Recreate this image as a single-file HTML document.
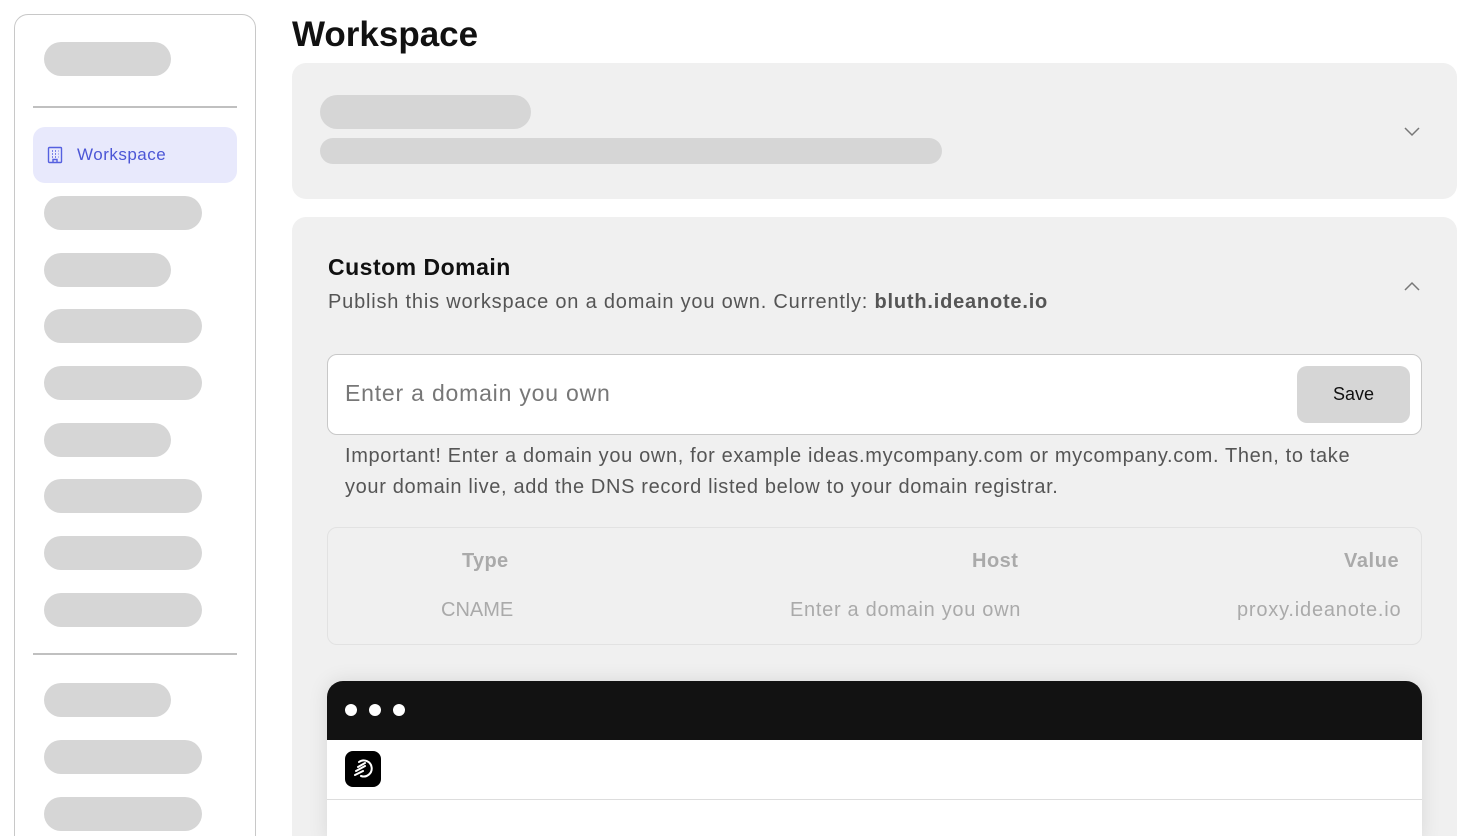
<!DOCTYPE html>
<html style="height:836px;overflow:hidden"><head><meta charset="utf-8"><style>
*{box-sizing:border-box;margin:0;padding:0}
body{width:1472px;height:836px;overflow:hidden;background:#fff;font-family:"Liberation Sans",sans-serif;position:relative}
.sk{position:absolute;background:#d6d6d6;border-radius:17px}
.side{position:absolute;left:14px;top:14px;width:242px;height:840px;border:1px solid #c8c8c8;border-radius:14px}
.hr{position:absolute;left:33px;width:204px;height:2px;background:#c0c0c0}
.card{position:absolute;left:292px;width:1165px;background:#f0f0f0;border-radius:14px}
.abs{position:absolute}
</style></head><body>
<div class="side"></div>
<div class="sk" style="left:44px;top:42px;width:127px;height:34px"></div>
<div class="hr" style="top:106px"></div>
<div class="abs" style="left:33px;top:127px;width:204px;height:56px;background:#e8e9fc;border-radius:12px"></div>
<svg class="abs" style="left:46px;top:146px" width="18" height="18" viewBox="0 0 18 18" fill="none" stroke="#5560e0" stroke-width="1.4"><rect x="2.5" y="1.5" width="13" height="15" rx="1"/><path d="M6 5h1M9 5h1M12 5h0.5M6 8h1M9 8h1M12 8h0.5M6 11h1M9 11h1M12 11h0.5M7 16.5v-3h4v3"/></svg>
<div class="abs" style="left:77px;top:145px;font-size:17px;color:#4c56d6;letter-spacing:0.5px">Workspace</div>
<div class="sk" style="left:44px;top:196px;width:158px;height:34px"></div>
<div class="sk" style="left:44px;top:253px;width:127px;height:34px"></div>
<div class="sk" style="left:44px;top:309px;width:158px;height:34px"></div>
<div class="sk" style="left:44px;top:366px;width:158px;height:34px"></div>
<div class="sk" style="left:44px;top:423px;width:127px;height:34px"></div>
<div class="sk" style="left:44px;top:479px;width:158px;height:34px"></div>
<div class="sk" style="left:44px;top:536px;width:158px;height:34px"></div>
<div class="sk" style="left:44px;top:593px;width:158px;height:34px"></div>
<div class="hr" style="top:653px"></div>
<div class="sk" style="left:44px;top:683px;width:127px;height:34px"></div>
<div class="sk" style="left:44px;top:740px;width:158px;height:34px"></div>
<div class="sk" style="left:44px;top:797px;width:158px;height:34px"></div>

<div class="abs" style="left:292px;top:15px;font-size:35px;font-weight:bold;color:#111">Workspace</div>
<div class="card" style="top:63px;height:136px"></div>
<div class="sk" style="left:320px;top:95px;width:211px;height:34px"></div>
<div class="sk" style="left:320px;top:138px;width:622px;height:26px;border-radius:13px"></div>
<svg class="abs" style="left:1403px;top:125px" width="18" height="12" viewBox="0 0 18 12" fill="none" stroke="#777" stroke-width="1.5"><path d="M2 3l7 7 7-7"/></svg>

<div class="card" style="top:217px;height:640px"></div>
<div class="abs" style="left:328px;top:254px;font-size:23px;font-weight:bold;color:#111;letter-spacing:0.5px">Custom Domain</div>
<div class="abs" style="left:328px;top:291px;font-size:20px;color:#555;letter-spacing:0.8px;white-space:nowrap">Publish this workspace on a domain you own. Currently: <b>bluth.ideanote.io</b></div>
<svg class="abs" style="left:1403px;top:280px" width="18" height="12" viewBox="0 0 18 12" fill="none" stroke="#777" stroke-width="1.5"><path d="M2 10l7-7 7 7"/></svg>
<div class="abs" style="left:327px;top:354px;width:1095px;height:81px;background:#fff;border:1px solid #c8c8c8;border-radius:10px"></div>
<div class="abs" style="left:345px;top:380px;font-size:23px;color:#777;letter-spacing:0.8px">Enter a domain you own</div>
<div class="abs" style="left:1297px;top:366px;width:113px;height:57px;background:#d6d6d6;border-radius:10px;font-size:18px;color:#111;text-align:center;line-height:57px">Save</div>
<div class="abs" style="left:345px;top:441px;width:1030px;font-size:20px;line-height:31px;color:#555;letter-spacing:0.65px">Important! Enter a domain you own, for example ideas.mycompany.com or mycompany.com. Then, to take your domain live, add the DNS record listed below to your domain registrar.</div>
<div class="abs" style="left:327px;top:527px;width:1095px;height:118px;border:1px solid #e2e2e2;border-radius:10px"></div>
<div class="abs" style="left:462px;top:550px;font-size:20px;font-weight:bold;color:#aaa;letter-spacing:0.3px">Type</div>
<div class="abs" style="left:972px;top:550px;font-size:20px;font-weight:bold;color:#aaa;letter-spacing:0.5px">Host</div>
<div class="abs" style="left:1344px;top:550px;font-size:20px;font-weight:bold;color:#aaa;letter-spacing:0.6px">Value</div>
<div class="abs" style="left:441px;top:599px;font-size:20px;color:#aaa">CNAME</div>
<div class="abs" style="left:790px;top:599px;font-size:20px;color:#aaa;letter-spacing:0.7px">Enter a domain you own</div>
<div class="abs" style="left:1237px;top:599px;font-size:20px;color:#aaa;letter-spacing:0.8px">proxy.ideanote.io</div>

<div class="abs" style="left:327px;top:681px;width:1095px;height:160px;background:#fff;border-radius:16px 16px 0 0;overflow:hidden;box-shadow:0 0 20px rgba(0,0,0,0.1)">
<div style="height:59px;background:#121212;position:relative">
<div class="abs" style="left:18px;top:23px;width:12px;height:12px;border-radius:50%;background:#fff"></div>
<div class="abs" style="left:42px;top:23px;width:12px;height:12px;border-radius:50%;background:#fff"></div>
<div class="abs" style="left:66px;top:23px;width:12px;height:12px;border-radius:50%;background:#fff"></div>
</div>
<div style="height:60px;border-bottom:1px solid #ddd;position:relative">
<div class="abs" style="left:18px;top:11px;width:36px;height:36px;background:#000;border-radius:8px">
<svg width="36" height="36" viewBox="0 0 36 36" fill="none" stroke="#fff" stroke-width="2" stroke-linecap="round"><path d="M14 11a8 8 0 1 1 2 14"/><path d="M13 16l7-4M11 20l9-5M10 24l8-4"/></svg>
</div></div>
</div>
</body></html>
